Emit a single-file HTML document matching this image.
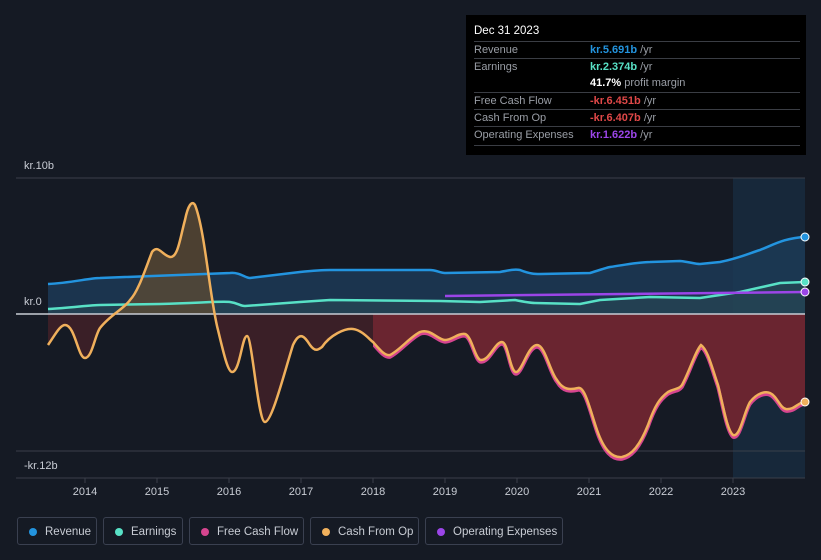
<!DOCTYPE html>
<html><head><style>
body{margin:0;width:821px;height:560px;background:#151a24;font-family:"Liberation Sans",sans-serif;overflow:hidden;position:relative;color:#fff}
.tt{position:absolute;left:466px;top:15px;width:340px;height:140px;background:#000;font-size:11px}
.tt .h{position:absolute;left:8px;top:10px;font-size:11.5px;color:#fff}
.row{position:absolute;left:8px;width:326px;border-top:1px solid #3a3d44;height:17px;line-height:17px;color:#9a9ea6}
.row b{position:absolute;left:116px;font-weight:bold}
.row span.u{color:#9a9ea6;font-weight:normal}
.lg{position:absolute;top:517px;height:28px;border:1px solid #3a4050;border-radius:3px;font-size:11.5px;color:#c8ccd4;line-height:28px;box-sizing:border-box;padding-left:27px}
.lg i{position:absolute;left:11px;top:10px;width:8px;height:8px;border-radius:50%}
.ax{position:absolute;font-size:11px;color:#c8ccd4}
</style></head><body>
<svg width="821" height="560" style="position:absolute;left:0;top:0">
<defs>
<clipPath id="pos"><rect x="0" y="0" width="821" height="314"/></clipPath>
<clipPath id="neg"><rect x="0" y="314" width="373" height="200"/></clipPath>
<clipPath id="neg2"><rect x="373" y="314" width="450" height="200"/></clipPath>
<path id="cfa" d="M48,345 C55,335 60,325 65,325 C75,325 78,358 85,358 C92,358 95,335 100,328 C110,315 125,308 130,300 C138,292 145,270 152,252 C158,244 162,255 170,257 C178,258 180,238 185,220 C188,205 192,200 195,205 C205,230 210,300 218,330 C224,355 228,372 232,372 C240,372 242,336 247,336 C252,336 258,422 265,422 C272,422 285,370 293,345 C300,330 305,337 310,345 C315,352 318,350 322,347 C330,335 345,328 353,329 C362,330 370,340 373,342 C380,350 385,356 390,355 C400,350 410,337 420,332 C430,328 438,340 445,340 C452,340 458,333 465,334 C472,336 475,360 481,360 C490,360 495,342 502,342 C508,342 510,372 516,372 C522,372 528,345 537,345 C545,345 550,372 557,380 C563,390 570,390 578,388 C585,386 590,410 597,430 C604,450 612,458 622,457 C632,455 640,445 648,425 C655,405 660,398 668,392 C675,388 678,390 682,385 C690,370 695,352 701,345 C708,350 712,368 718,385 C723,405 727,430 733,435 C740,438 744,412 750,402 C757,393 765,391 770,393 C777,396 780,408 786,409 C795,410 798,402 805,402 L805,314 L48,314Z"/>
<path id="cf" d="M48,345 C55,335 60,325 65,325 C75,325 78,358 85,358 C92,358 95,335 100,328 C110,315 125,308 130,300 C138,292 145,270 152,252 C158,244 162,255 170,257 C178,258 180,238 185,220 C188,205 192,200 195,205 C205,230 210,300 218,330 C224,355 228,372 232,372 C240,372 242,336 247,336 C252,336 258,422 265,422 C272,422 285,370 293,345 C300,330 305,337 310,345 C315,352 318,350 322,347 C330,335 345,328 353,329 C362,330 370,340 373,342 C380,350 385,356 390,355 C400,350 410,337 420,332 C430,328 438,340 445,340 C452,340 458,333 465,334 C472,336 475,360 481,360 C490,360 495,342 502,342 C508,342 510,372 516,372 C522,372 528,345 537,345 C545,345 550,372 557,380 C563,390 570,390 578,388 C585,386 590,410 597,430 C604,450 612,458 622,457 C632,455 640,445 648,425 C655,405 660,398 668,392 C675,388 678,390 682,385 C690,370 695,352 701,345 C708,350 712,368 718,385 C723,405 727,430 733,435 C740,438 744,412 750,402 C757,393 765,391 770,393 C777,396 780,408 786,409 C795,410 798,402 805,402"/>
</defs>
<rect x="733" y="178" width="72" height="300" fill="#17283a"/>
<line x1="16" y1="178" x2="805" y2="178" stroke="#3a3f4a"/>
<line x1="16" y1="451" x2="805" y2="451" stroke="#3a3f4a"/>
<line x1="16" y1="478" x2="805" y2="478" stroke="#3a3f4a"/>
<path d="M48,284 C70,283 90,278 100,278 L230,273 C240,272 245,278 250,278 L300,272 C310,271 320,270 330,270 L430,270 C436,270 440,273 445,273 L500,272 C510,270 515,269 520,270 C530,274 535,274 540,274 L590,273 C600,270 605,268 610,267 C630,264 640,262 650,262 L680,261 C690,262 695,264 700,264 L720,262 C740,258 750,253 760,250 C775,244 785,238 805,237 L805,314 L48,314Z" fill="#1c3956" opacity="0.85"/>
<path d="M48,309 C70,308 90,305 100,305 L160,304 C200,303 220,301 230,302 C238,303 240,306 245,306 L300,302 L330,300 L440,301 L480,302 L515,300 C525,302 530,303 535,303 L580,304 L600,300 L650,297 L700,298 L740,292 L780,283 L805,282 L805,314 L48,314Z" fill="#2a4a55" opacity="0.6"/>
<g clip-path="url(#pos)"><use href="#cfa" fill="#5a4a35" opacity="0.8"/></g>
<g clip-path="url(#neg)"><use href="#cfa" fill="#3a1f27"/></g>
<g clip-path="url(#neg2)"><use href="#cfa" fill="#6a2530"/></g>
<line x1="16" y1="314" x2="805" y2="314" stroke="#c8ccd4" stroke-width="1.5"/>
<path d="M48,284 C70,283 90,278 100,278 L230,273 C240,272 245,278 250,278 L300,272 C310,271 320,270 330,270 L430,270 C436,270 440,273 445,273 L500,272 C510,270 515,269 520,270 C530,274 535,274 540,274 L590,273 C600,270 605,268 610,267 C630,264 640,262 650,262 L680,261 C690,262 695,264 700,264 L720,262 C740,258 750,253 760,250 C775,244 785,238 805,237" fill="none" stroke="#2394df" stroke-width="2.5"/>
<path d="M48,309 C70,308 90,305 100,305 L160,304 C200,303 220,301 230,302 C238,303 240,306 245,306 L300,302 L330,300 L440,301 L480,302 L515,300 C525,302 530,303 535,303 L580,304 L600,300 L650,297 L700,298 L740,292 L780,283 L805,282" fill="none" stroke="#58e1c6" stroke-width="2.5"/>
<path d="M445,296 L805,292" fill="none" stroke="#9b45e8" stroke-width="2.5"/>
<g clip-path="url(#neg2)"><use href="#cf" fill="none" stroke="#d6458f" stroke-width="3.5" transform="translate(0,2)"/></g>
<use href="#cf" fill="none" stroke="#f0b05c" stroke-width="2.5"/>
<circle cx="805" cy="237" r="4" fill="#2394df" stroke="#fff" stroke-width="1"/>
<circle cx="805" cy="282" r="4" fill="#58e1c6" stroke="#fff" stroke-width="1"/>
<circle cx="805" cy="292" r="4" fill="#9b45e8" stroke="#fff" stroke-width="1"/>
<circle cx="805" cy="402" r="4" fill="#f0b05c" stroke="#fff" stroke-width="1"/>
<g stroke="#3a3f4a"><line x1="85" y1="478" x2="85" y2="483"/><line x1="157" y1="478" x2="157" y2="483"/><line x1="229" y1="478" x2="229" y2="483"/><line x1="301" y1="478" x2="301" y2="483"/><line x1="373" y1="478" x2="373" y2="483"/><line x1="445" y1="478" x2="445" y2="483"/><line x1="517" y1="478" x2="517" y2="483"/><line x1="589" y1="478" x2="589" y2="483"/><line x1="661" y1="478" x2="661" y2="483"/><line x1="733" y1="478" x2="733" y2="483"/></g>
<g font-family="Liberation Sans" font-size="11" fill="#c8ccd4" text-anchor="middle">
<text x="85" y="495">2014</text><text x="157" y="495">2015</text><text x="229" y="495">2016</text><text x="301" y="495">2017</text><text x="373" y="495">2018</text><text x="445" y="495">2019</text><text x="517" y="495">2020</text><text x="589" y="495">2021</text><text x="661" y="495">2022</text><text x="733" y="495">2023</text>
</g>
</svg>
<div class="ax" style="left:24px;top:160px">kr.10b</div>
<div class="ax" style="left:24px;top:296px">kr.0</div>
<div class="ax" style="left:24px;top:460px">-kr.12b</div>
<div class="tt">
<div class="h">Dec 31 2023</div>
<div class="row" style="top:26px">Revenue<b style="color:#2394df">kr.5.691b <span class="u">/yr</span></b></div>
<div class="row" style="top:43px">Earnings<b style="color:#58e1c6">kr.2.374b <span class="u">/yr</span></b></div>
<div class="row" style="top:60px;border-top:none"><b style="color:#fff">41.7% <span class="u">profit margin</span></b></div>
<div class="row" style="top:77px">Free Cash Flow<b style="color:#e04848">-kr.6.451b <span class="u">/yr</span></b></div>
<div class="row" style="top:94px">Cash From Op<b style="color:#e04848">-kr.6.407b <span class="u">/yr</span></b></div>
<div class="row" style="top:111px">Operating Expenses<b style="color:#9b45e8">kr.1.622b <span class="u">/yr</span></b></div>
<div class="row" style="top:130px;height:0"></div>
</div>
<div class="lg" style="left:17px;width:80px"><i style="background:#2394df"></i>Revenue</div>
<div class="lg" style="left:103px;width:80px"><i style="background:#58e1c6"></i>Earnings</div>
<div class="lg" style="left:189px;width:115px"><i style="background:#d6458f"></i>Free Cash Flow</div>
<div class="lg" style="left:310px;width:109px"><i style="background:#f0b05c"></i>Cash From Op</div>
<div class="lg" style="left:425px;width:138px"><i style="background:#9b45e8"></i>Operating Expenses</div>
</body></html>
